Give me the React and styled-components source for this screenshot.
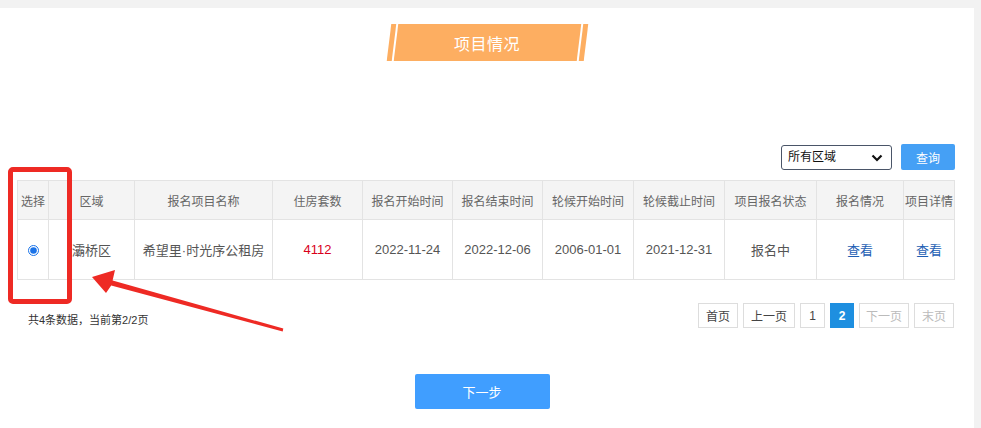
import React, { useState } from "react";
import styled, { createGlobalStyle } from "styled-components";

const GlobalStyle = createGlobalStyle`
  html, body {
    margin: 0;
    padding: 0;
    background: #f2f2f2;
    font-family: "Liberation Sans", "Noto Sans CJK SC", sans-serif;
    color: #333;
  }
`;

const columns = [
  { title: "选择", width: 31 },
  { title: "区域", width: 86 },
  { title: "报名项目名称", width: 138 },
  { title: "住房套数", width: 90 },
  { title: "报名开始时间", width: 90 },
  { title: "报名结束时间", width: 90 },
  { title: "轮候开始时间", width: 91 },
  { title: "轮候截止时间", width: 91 },
  { title: "项目报名状态", width: 92 },
  { title: "报名情况", width: 87 },
  { title: "项目详情", width: 51 },
];

const rows = [
  {
    id: 1,
    area: "灞桥区",
    name: "希望里·时光序公租房",
    count: "4112",
    signStart: "2022-11-24",
    signEnd: "2022-12-06",
    waitStart: "2006-01-01",
    waitEnd: "2021-12-31",
    status: "报名中",
  },
];

const pages = [
  { label: "首页", width: 40 },
  { label: "上一页", width: 52 },
  { label: "1", width: 25 },
  { label: "2", width: 24, active: true },
  { label: "下一页", width: 50, disabled: true },
  { label: "末页", width: 40, disabled: true },
];

export default function App() {
  const [selected, setSelected] = useState(1);
  const [area, setArea] = useState("all");

  return (
    <Page>
      <GlobalStyle />
      <Panel>
        <BannerRow>
          <Banner>
            <Stripe />
            <BannerBody>
              <BannerText>项目情况</BannerText>
            </BannerBody>
            <Stripe />
          </Banner>
        </BannerRow>

        <FilterRow>
          <SelectWrap>
            <AreaSelect value={area} onChange={(e) => setArea(e.target.value)}>
              <option value="all">所有区域</option>
              <option value="bq">灞桥区</option>
            </AreaSelect>
            <Chevron viewBox="0 0 12 8">
              <path d="M1.5 1.5 L6 6 L10.5 1.5" fill="none" stroke="#111" strokeWidth="2.2" />
            </Chevron>
          </SelectWrap>
          <QueryButton>查询</QueryButton>
        </FilterRow>

        <Table>
          <colgroup>
            {columns.map((c) => (
              <col key={c.title} style={{ width: c.width }} />
            ))}
          </colgroup>
          <thead>
            <tr>
              {columns.map((c) => (
                <Th key={c.title}>{c.title}</Th>
              ))}
            </tr>
          </thead>
          <tbody>
            {rows.map((r) => (
              <tr key={r.id}>
                <Td>
                  <Radio
                    type="radio"
                    checked={selected === r.id}
                    onChange={() => setSelected(r.id)}
                  />
                </Td>
                <Td>{r.area}</Td>
                <Td>{r.name}</Td>
                <Td $tone="red">{r.count}</Td>
                <Td>{r.signStart}</Td>
                <Td>{r.signEnd}</Td>
                <Td>{r.waitStart}</Td>
                <Td>{r.waitEnd}</Td>
                <Td>{r.status}</Td>
                <Td $tone="link">查看</Td>
                <Td $tone="link">查看</Td>
              </tr>
            ))}
          </tbody>
        </Table>

        <PagerRow>
          <PageInfo>共4条数据，当前第2/2页</PageInfo>
          <Pager>
            {pages.map((p) => (
              <PageButton
                key={p.label}
                $active={p.active}
                $disabled={p.disabled}
                style={{ width: p.width }}
              >
                {p.label}
              </PageButton>
            ))}
          </Pager>
        </PagerRow>

        <NextRow>
          <NextButton>下一步</NextButton>
        </NextRow>
      </Panel>

      <MarkBox />
      <ArrowSvg width="981" height="428" viewBox="0 0 981 428">
        <polygon
          points="92,277 115,270 112.6,280.4 283.3,328.6 282.7,331.4 111.2,285.6 106,293"
          fill="#ee2a24"
        />
      </ArrowSvg>
    </Page>
  );
}

const Page = styled.div`
  position: relative;
  padding-top: 8px;
  min-height: 420px;
  width: 981px;
`;

const Panel = styled.section`
  width: 974px;
  min-height: calc(100vh - 8px);
  box-sizing: border-box;
  background: #fff;
  padding: 16px 20px 0 17px;
`;

const BannerRow = styled.div`
  display: flex;
  justify-content: center;
  padding-left: 3px;
`;

const Banner = styled.div`
  display: flex;
  align-items: stretch;
  gap: 2px;
  height: 37px;
`;

const Stripe = styled.span`
  width: 5px;
  background: #fdae61;
  transform: skewX(-7deg);
`;

const BannerBody = styled.div`
  width: 183px;
  display: flex;
  align-items: center;
  justify-content: center;
  background: #fdae61;
  transform: skewX(-7deg);
`;

const BannerText = styled.span`
  transform: skewX(7deg);
  color: #fff;
  font-size: 16px;
  letter-spacing: 0.5px;
`;

const FilterRow = styled.div`
  display: flex;
  justify-content: flex-end;
  align-items: center;
  gap: 9px;
  margin-top: 83px;
  margin-right: -1px;
`;

const SelectWrap = styled.div`
  position: relative;
  width: 111px;
  height: 25px;
`;

const AreaSelect = styled.select`
  appearance: none;
  width: 100%;
  height: 100%;
  box-sizing: border-box;
  border: 1px solid #4a5568;
  border-radius: 3px;
  background: #fff;
  padding: 0 0 0 6px;
  font-family: "Liberation Sans", "Noto Sans CJK SC", sans-serif;
  font-size: 12px;
  color: #111;
  outline: none;
`;

const Chevron = styled.svg`
  position: absolute;
  right: 9px;
  top: 9px;
  width: 12px;
  height: 8px;
  pointer-events: none;
`;

const QueryButton = styled.button`
  width: 54px;
  height: 26px;
  border: none;
  border-radius: 2px;
  background: #45a0f5;
  color: #fff;
  font-family: "Liberation Sans", "Noto Sans CJK SC", sans-serif;
  font-size: 12px;
  cursor: pointer;
`;

const Table = styled.table`
  width: 937px;
  margin-top: 10px;
  border-collapse: collapse;
  table-layout: fixed;
`;

const Th = styled.th`
  height: 38px;
  padding: 0;
  border: 1px solid #e3e3e3;
  background: #f4f4f4;
  color: #666;
  font-size: 12px;
  font-weight: normal;
  text-align: center;
  white-space: nowrap;
  overflow: hidden;
`;

const toneColor = { red: "#d9001b", link: "#1e5fb4" };

const Td = styled.td`
  height: 59px;
  padding: 0;
  border: 1px solid #e3e3e3;
  color: ${(p) => toneColor[p.$tone] || "#555"};
  font-size: 13px;
  text-align: center;
  white-space: nowrap;
  cursor: ${(p) => (p.$tone === "link" ? "pointer" : "default")};
`;

const Radio = styled.input`
  width: 11px;
  height: 11px;
  margin: 0;
  accent-color: #1a73e8;
  vertical-align: middle;
`;

const PagerRow = styled.div`
  display: flex;
  justify-content: space-between;
  align-items: center;
  margin-top: 23px;
`;

const PageInfo = styled.span`
  padding: 6px 0 0 11px;
  font-size: 11px;
  color: #333;
`;

const Pager = styled.div`
  display: flex;
  gap: 5px;
`;

const PageButton = styled.span`
  height: 25px;
  box-sizing: border-box;
  display: flex;
  align-items: center;
  justify-content: center;
  border: 1px solid ${(p) => (p.$active ? "#1e8fe0" : "#ddd")};
  background: ${(p) => (p.$active ? "#1e8fe0" : "#fff")};
  color: ${(p) => (p.$active ? "#fff" : p.$disabled ? "#bbb" : "#444")};
  font-size: 12px;
  font-weight: ${(p) => (p.$active ? "bold" : "normal")};
  cursor: ${(p) => (p.$disabled ? "default" : "pointer")};
`;

const NextRow = styled.div`
  display: flex;
  justify-content: center;
  margin-top: 46px;
  padding-right: 7px;
`;

const NextButton = styled.button`
  width: 135px;
  height: 35px;
  border: none;
  border-radius: 2px;
  background: #409eff;
  color: #fff;
  font-family: "Liberation Sans", "Noto Sans CJK SC", sans-serif;
  font-size: 13px;
  cursor: pointer;
`;

const MarkBox = styled.div`
  position: absolute;
  left: 8px;
  top: 167px;
  width: 64px;
  height: 137px;
  box-sizing: border-box;
  border: 5px solid #ee2a24;
  border-radius: 5px;
  pointer-events: none;
`;

const ArrowSvg = styled.svg`
  position: absolute;
  left: 0;
  top: 0;
  pointer-events: none;
`;
